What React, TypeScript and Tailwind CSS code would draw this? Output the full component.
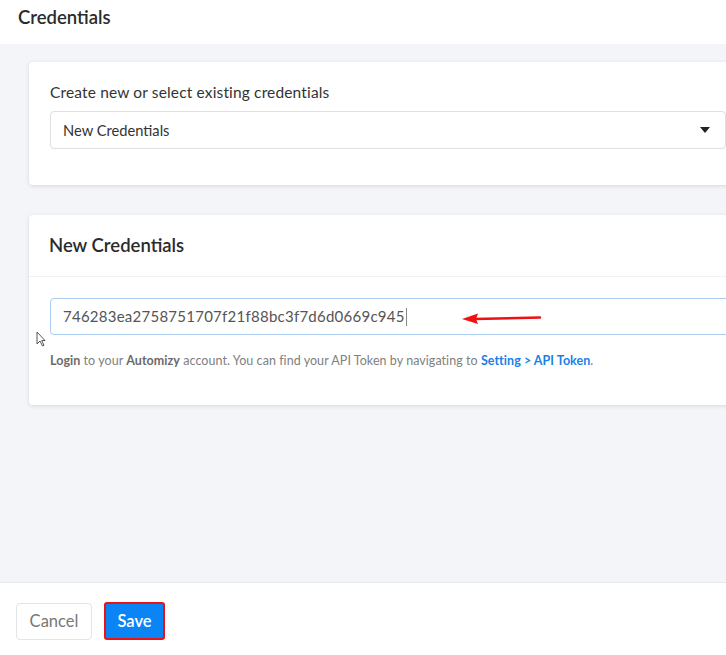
import React from "react";

export default function App() {
  const font = { fontFamily: "Lato, 'Noto Sans', sans-serif" };
  return (
    <div className="w-[726px] h-[655px] overflow-hidden bg-white flex flex-col relative" style={font}>
      <div className="h-[44px] shrink-0 flex items-center pl-[18px] pb-[8px] bg-white">
        <h1 className="text-[18.5px] font-semibold text-[#2b2b2b]">Credentials</h1>
      </div>
      <div className="flex-1 bg-[#f3f5f9] pt-[18px] pl-[29px] flex flex-col gap-[30px] border-b border-[#e6eaf0]">
        <div className="w-[720px] shrink-0 bg-white rounded-[4px] shadow-[0_1px_4px_rgba(0,0,0,0.12)] pt-[20px] pb-[36px] pl-[21px]">
          <div className="text-[15.5px] tracking-[0.15px] text-[#333] leading-[20px]">Create new or select existing credentials</div>
          <div className="mt-[9px] w-[676px] h-[38px] border border-[#dcdfe4] rounded-[4px] flex items-center pl-[12px] pr-[15px] justify-between">
            <span className="text-[14.7px] text-[#333]">New Credentials</span>
            <svg width="10" height="6" viewBox="0 0 10 6"><path d="M0 0 L10 0 L5 6 Z" fill="#222" /></svg>
          </div>
        </div>
        <div className="w-[720px] shrink-0 bg-white rounded-[4px] shadow-[0_1px_4px_rgba(0,0,0,0.12)]">
          <div className="h-[62px] flex items-center pl-[20px] border-b border-[#f0f2f6]">
            <h2 className="text-[18.5px] font-semibold text-[#2b2b2b]">New Credentials</h2>
          </div>
          <div className="pt-[21px] pb-[34px] pl-[21px]">
            <div className="w-[690px] h-[37px] border border-[#a9cbef] rounded-[4px] flex items-center pl-[12px]">
              <span className="text-[15px] text-[#555] tracking-[0.25px]">746283ea2758751707f21f88bc3f7d6d0669c945</span>
              <span className="w-px h-[18px] bg-[#888] ml-[1px]" />
            </div>
            <div className="mt-[17px] text-[12.5px] tracking-[0.05px] text-[#808080]">
              <b className="font-bold text-[#6b6b6b]">Login</b> to your <b className="font-bold text-[#6b6b6b]">Automizy</b> account. You can find your API Token by navigating to <b className="font-bold text-[#1a7fe8]">Setting &gt; API Token</b>.
            </div>
          </div>
        </div>
      </div>
      <div className="h-[72px] shrink-0 bg-white flex items-center pl-[16px] pt-[4px] gap-[12px]">
        <button className="h-[37px] w-[76px] border border-[#e2e4e8] rounded-[4px] text-[16.5px] text-[#777] bg-white">Cancel</button>
        <button className="h-[38px] w-[61px] bg-[#0b84f5] border-2 border-[#ee1111] rounded-[3px] text-[16.5px] font-semibold text-white">Save</button>
      </div>
      <svg className="absolute left-[460px] top-[311px]" width="84" height="14" viewBox="0 0 84 14">
        <path d="M80 6.5 L14 8" stroke="#ee1111" strokeWidth="2.5" strokeLinecap="round" />
        <path d="M2 8 L18 2.5 L16 8 L18 13 Z" fill="#ee1111" />
      </svg>
      <svg className="absolute left-[36px] top-[331px]" width="10" height="16" viewBox="0 0 10 16">
        <path d="M1 1 L1 13 L4 10 L6.5 15 L8 14.3 L5.7 9.5 L9 9.5 Z" fill="white" stroke="#444" strokeWidth="0.9" strokeLinejoin="round" />
      </svg>
    </div>
  );
}
